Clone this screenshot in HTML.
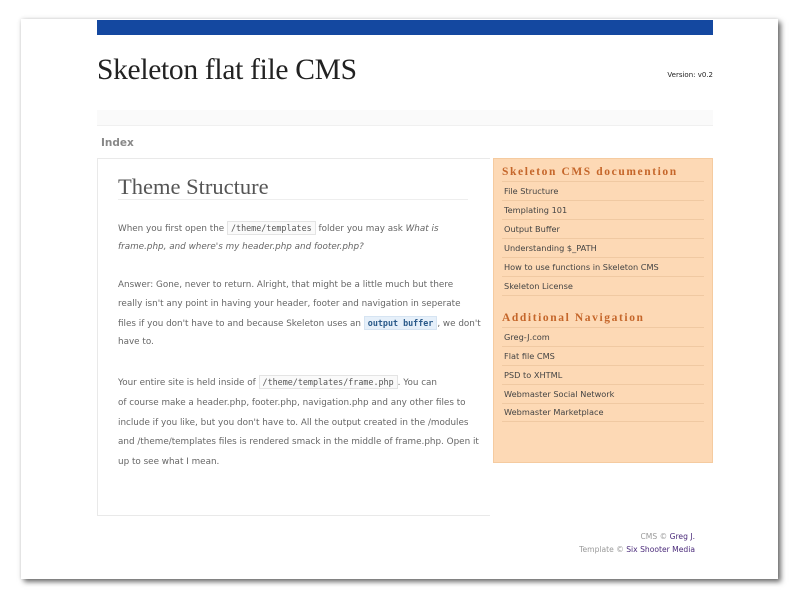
<!DOCTYPE html>
<html><head><meta charset="utf-8"><style>
body{margin:0;width:800px;height:600px;background:#fff;position:relative;overflow:hidden;font-family:"DejaVu Sans","Liberation Sans",sans-serif;}
.page{position:absolute;left:21px;top:19px;width:757px;height:560px;background:#fff;box-shadow:3px 3px 5px rgba(0,0,0,.55),0 0 4px rgba(0,0,0,.15);}
.a{position:absolute;white-space:nowrap;}
.p{font-size:8.8px;color:#666;left:118px;}
code{font-family:"DejaVu Sans Mono",monospace;font-size:8.4px;border:1px solid #e4e4e4;background:#fafafa;padding:1px 3px;color:#555}
code.b{background:#e6f0fa;border-color:#d6e4f2;color:#2a5a8a;font-weight:bold}
.s{left:504px;font-size:8.2px;color:#444;}
.ln{position:absolute;left:502px;width:202px;height:1px;background:#f0c9a2;}
.h{left:502px;font-family:"Liberation Serif",serif;font-weight:bold;font-size:11.5px;letter-spacing:1.6px;color:#c5662a;}
</style></head><body>
<div class="page"></div>
<div class="a" style="left:97px;top:20px;width:616px;height:15px;background:#1448a0"></div>
<div class="a" style="left:97px;top:54px;font-family:'Liberation Serif',serif;font-size:29.5px;color:#222;letter-spacing:-0.3px">Skeleton flat file CMS</div>
<div class="a" style="right:87px;top:71px;font-size:7px;color:#222">Version: v0.2</div>
<div class="a" style="left:97px;top:110px;width:616px;height:15px;background:#fafafa;border-bottom:1px solid #f0f0f0"></div>
<div class="a" style="left:101px;top:137px;font-size:10.5px;color:#888;font-weight:bold">Index</div>
<div class="a" style="left:97px;top:158px;width:392px;height:356px;border:1px solid #e9e9e9;border-right:none;background:#fff"></div>
<div class="a" style="left:118px;top:174px;font-family:'Liberation Serif',serif;font-size:22.5px;color:#555">Theme Structure</div>
<div class="a" style="left:118px;top:199px;width:350px;height:1px;background:#eee"></div>
<div class="a p" style="top:223px">When you first open the <code>/theme/templates</code> folder you may ask <i>What is</i></div>
<div class="a p" style="top:242px"><i>frame.php, and where's my header.php and footer.php?</i></div>
<div class="a p" style="top:280px">Answer: Gone, never to return. Alright, that might be a little much but there</div>
<div class="a p" style="top:299px">really isn't any point in having your header, footer and navigation in seperate</div>
<div class="a p" style="top:318px">files if you don't have to and because Skeleton uses an <code class="b">output buffer</code>, we don't</div>
<div class="a p" style="top:337px">have to.</div>
<div class="a p" style="top:377px">Your entire site is held inside of <code>/theme/templates/frame.php</code>. You can</div>
<div class="a p" style="top:398px">of course make a header.php, footer.php, navigation.php and any other files to</div>
<div class="a p" style="top:418px">include if you like, but you don't have to. All the output created in the /modules</div>
<div class="a p" style="top:437px">and /theme/templates files is rendered smack in the middle of frame.php. Open it</div>
<div class="a p" style="top:457px">up to see what I mean.</div>
<div class="a" style="left:493px;top:158px;width:218px;height:303px;background:#fdd9b5;border:1px solid #f5cba0"></div>
<div class="a h" style="top:166px">Skeleton CMS documention</div>
<div class="ln" style="top:181px"></div>
<div class="a s" style="top:186px">File Structure</div><div class="ln" style="top:200px"></div>
<div class="a s" style="top:205px">Templating 101</div><div class="ln" style="top:219px"></div>
<div class="a s" style="top:224px">Output Buffer</div><div class="ln" style="top:238px"></div>
<div class="a s" style="top:243px">Understanding $_PATH</div><div class="ln" style="top:257px"></div>
<div class="a s" style="top:262px">How to use functions in Skeleton CMS</div><div class="ln" style="top:276px"></div>
<div class="a s" style="top:281px">Skeleton License</div><div class="ln" style="top:295px"></div>
<div class="a h" style="top:312px">Additional Navigation</div>
<div class="ln" style="top:327px"></div>
<div class="a s" style="top:332px">Greg-J.com</div><div class="ln" style="top:346px"></div>
<div class="a s" style="top:351px">Flat file CMS</div><div class="ln" style="top:365px"></div>
<div class="a s" style="top:370px">PSD to XHTML</div><div class="ln" style="top:384px"></div>
<div class="a s" style="top:389px">Webmaster Social Network</div><div class="ln" style="top:403px"></div>
<div class="a s" style="top:407px">Webmaster Marketplace</div><div class="ln" style="top:421px"></div>
<div class="a" style="right:105px;top:532px;font-size:7.6px;color:#999;text-align:right">CMS © <span style="color:#4a2a7a">Greg J.</span></div>
<div class="a" style="right:105px;top:545px;font-size:7.6px;color:#999;text-align:right">Template © <span style="color:#4a2a7a">Six Shooter Media</span></div>
</body></html>
